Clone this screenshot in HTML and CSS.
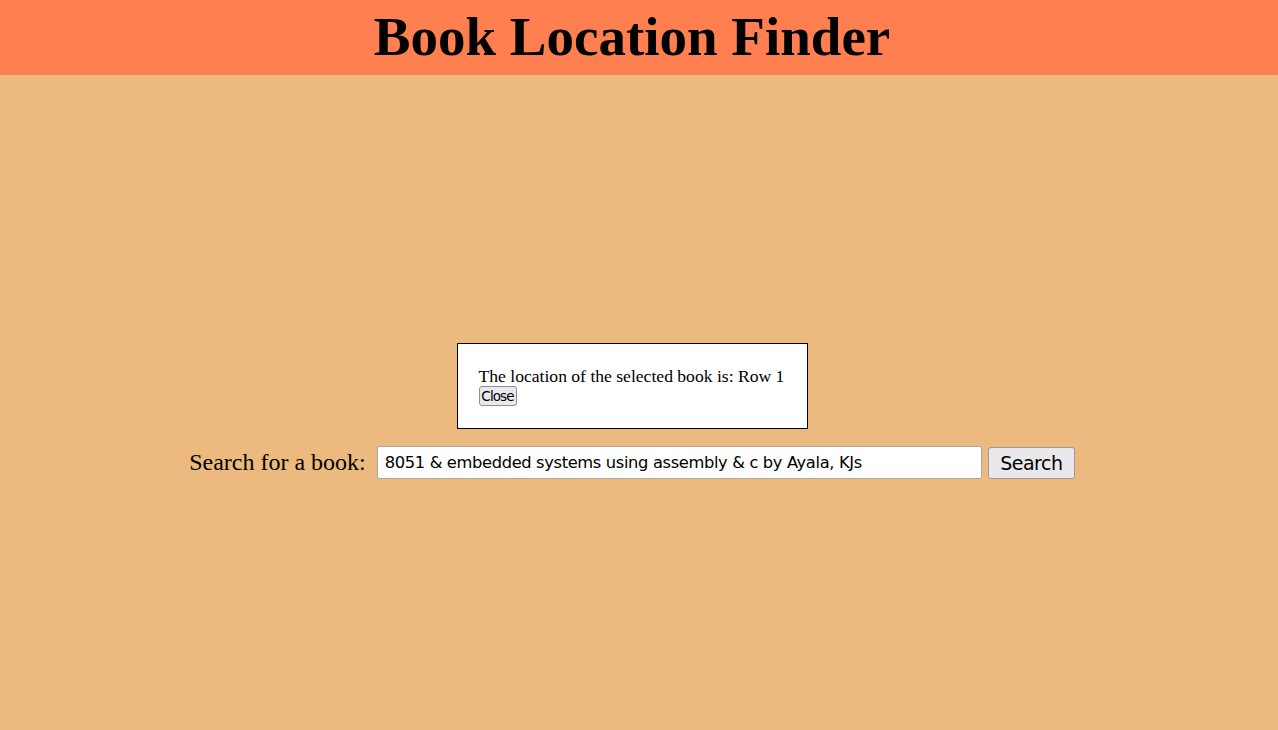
FILE: index.html
```html
<!DOCTYPE html>
<html>
<head>
<meta charset="utf-8">
<title>Book Location Finder</title>
<link rel="stylesheet" href="styles.css">
</head>
<body>
<header class="header">
  <h1 class="title">Book Location Finder</h1>
</header>
<main class="main">
  <div class="modal">
    <p class="modal-text">The location of the selected book is: Row 1</p>
    <button class="close-btn" type="button">Close</button>
  </div>
  <form class="search-row">
    <label class="search-label" for="q">Search for a book:</label>
    <input class="search-input" id="q" type="text" value="8051 &amp; embedded systems using assembly &amp; c by Ayala, KJs">
    <button class="search-btn" type="button">Search</button>
  </form>
</main>
</body>
</html>
```

FILE: styles.css
```css
html, body {
  margin: 0;
  padding: 0;
}
body {
  background: #ecba7e;
  font-family: "Liberation Serif", "Times New Roman", serif;
  height: 730px;
  overflow: hidden;
}
.header {
  background: #ff7f50;
  height: 75px;
  display: flex;
  justify-content: center;
  align-items: center;
  padding-right: 14px;
}
.title {
  margin: 0 0 2px;
  font-size: 55px;
  font-weight: bold;
  line-height: 1;
  color: #000;
}
.main {
  display: flex;
  flex-direction: column;
  align-items: center;
  padding-top: 268px;
  padding-right: 14px;
}
.modal {
  box-sizing: border-box;
  width: 351px;
  height: 86px;
  background: #fff;
  border: 1px solid #000;
  padding: 22px 21px 0;
}
.modal-text {
  margin: 0;
  font-size: 17.6px;
  line-height: 20px;
  color: #000;
}
.close-btn {
  display: block;
  font-family: "DejaVu Sans", sans-serif;
  font-size: 13.5px;
  padding: 0 1px;
  height: 20px;
  width: 38px;
  border: 1px solid #8f8f8f;
  border-radius: 3px;
  background: #e9e9ed;
  color: #000;
  letter-spacing: -0.9px;
  line-height: 18px;
}
.search-row {
  margin: 17px 0 0;
  display: flex;
  align-items: center;
}
.search-label {
  font-size: 24px;
  color: #000;
  margin-right: 11px;
}
.search-input {
  box-sizing: border-box;
  width: 605px;
  height: 33px;
  border: 1px solid #a8a8a8;
  border-radius: 2px;
  background: #fff;
  font-family: "DejaVu Sans", sans-serif;
  font-size: 16.3px;
  letter-spacing: -0.35px;
  padding: 0 7px;
  color: #000;
}
.search-btn {
  margin-left: 6px;
  height: 32px;
  width: 87px;
  font-family: "DejaVu Sans", sans-serif;
  font-size: 19px;
  letter-spacing: -0.5px;
  border: 1px solid #9a9a9a;
  border-radius: 3px;
  background: #e9e9ed;
  color: #000;
  padding: 0;
}
```
